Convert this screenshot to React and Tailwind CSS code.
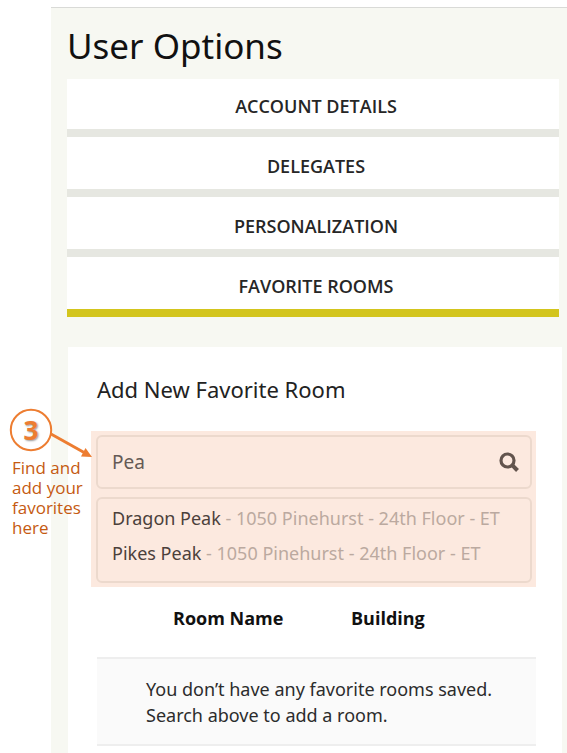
import { useState } from "react";

const tabs = ["Account Details", "Delegates", "Personalization", "Favorite Rooms"];

const rooms = [
  { name: "Dragon Peak", place: "1050 Pinehurst - 24th Floor - ET" },
  { name: "Pikes Peak", place: "1050 Pinehurst - 24th Floor - ET" },
];

function Tabs() {
  return (
    <nav className="mr-2 ml-4 flex flex-col">
      {tabs.map((tab, i) => (
        <button
          key={tab}
          type="button"
          className={
            "flex items-end justify-center border-b-8 bg-white pb-[11px] pl-1.5 text-lg leading-6 font-semibold text-[#262626] uppercase " +
            (i === 0 ? "h-[58px] " : "h-[60px] ") +
            (i === tabs.length - 1 ? "border-[#d3c51d]" : "border-[#e6e7e1]")
          }
        >
          {tab}
        </button>
      ))}
    </nav>
  );
}

function RoomSearch() {
  const [query, setQuery] = useState("Pea");
  return (
    <div className="mr-[26px] ml-[23px] flex flex-col gap-2 bg-[#fce9df] py-1 pr-1 pl-[5px]">
      <div className="flex h-[54px] items-center rounded-md border-2 border-[#ecd9cd] pr-[11px] pl-3.5">
        <input
          aria-label="Find a room"
          value={query}
          onChange={(e) => setQuery(e.target.value)}
          className="min-w-0 flex-1 bg-transparent font-['Noto_Sans',sans-serif] text-[19px] text-[#655a55] outline-none"
        />
        <button type="button" aria-label="Search" className="text-[#62544d]">
          <svg width="20" height="20" viewBox="0 0 20 20" fill="none" stroke="currentColor" strokeWidth="3.2">
            <circle cx="8.5" cy="8.5" r="6.5" />
            <path d="M13.2 13.2 18.5 18.5" strokeWidth="4" />
          </svg>
        </button>
      </div>
      <ul className="h-[86px] rounded-md border-2 border-[#ecd9cd] pt-0.5 pl-3.5 font-['Noto_Sans',sans-serif] text-lg leading-[35px] whitespace-nowrap text-[#bba9a0]">
        {rooms.map((room) => (
          <li key={room.name}>
            <span className="text-[#4b403b]">{room.name}</span> - {room.place}
          </li>
        ))}
      </ul>
    </div>
  );
}

function Callout() {
  return (
    <aside className="absolute top-[408px] left-[9px]">
      <svg width="86" height="50" viewBox="0 0 86 50" className="absolute top-0 left-0">
        <circle cx="22" cy="22" r="20.2" fill="#fff" stroke="#ed7d31" strokeWidth="2" />
        <path d="M42 26 76 45" stroke="#ed7d31" strokeWidth="3" />
        <path d="M83 49 72 48.5 76.5 40Z" fill="#ed7d31" />
      </svg>
      <div className="relative flex size-11 items-center justify-center text-[26px] leading-none font-bold text-[#ed7d31] [text-shadow:1px_1px_2px_#999]">
        3
      </div>
      <p className="relative mt-1.5 w-20 pl-[3px] text-[17px] leading-5 text-[#c55a11]">
        Find and
        <br />
        add your
        <br />
        favorites
        <br />
        here
      </p>
    </aside>
  );
}

export default function App() {
  return (
    <div className="relative h-screen overflow-hidden bg-white pt-[7px] pl-[51px] font-['Open_Sans','Noto_Sans',sans-serif]">
      <main className="flex min-h-full flex-col border-t border-[#d9dad7] bg-[#f7f8f2]">
        <h1 className="ml-4 pt-3.5 pb-[9px] font-['Noto_Sans',sans-serif] text-[35px] leading-[48px] text-[#111]">User Options</h1>
        <Tabs />
        <section className="mt-[30px] mr-[5px] ml-[17px] flex-1 bg-white">
          <h2 className="pt-7 pb-7 pl-[29px] font-['Noto_Sans',sans-serif] text-[22px] leading-7 text-[#222]">Add New Favorite Room</h2>
          <RoomSearch />
          <table className="mt-[11px] ml-[29px] w-[439px] table-fixed border-collapse text-left">
            <thead>
              <tr className="h-[60px] align-top text-lg leading-10 font-bold text-[#111]">
                <th className="w-[254px] pl-[76px]">Room Name</th>
                <th>Building</th>
              </tr>
            </thead>
            <tbody>
              <tr className="border-y-2 border-[#eee] bg-[#fafafa]">
                <td colSpan={2} className="pt-[17px] pb-4 pl-[49px] font-['Noto_Sans',sans-serif] text-lg leading-[26px] text-[#2c2c2c]">
                  You don’t have any favorite rooms saved.
                  <br />
                  Search above to add a room.
                </td>
              </tr>
            </tbody>
          </table>
        </section>
      </main>
      <Callout />
    </div>
  );
}
